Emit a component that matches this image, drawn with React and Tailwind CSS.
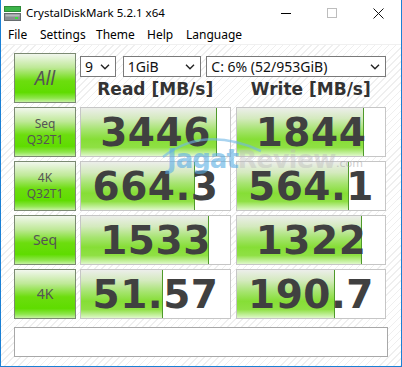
import React from "react";

const rows = [
  { label: ["Seq", "Q32T1"], read: "3446", readBar: 136, write: "1844", writeBar: 127 },
  { label: ["4K", "Q32T1"], read: "664.3", readBar: 114, write: "564.1", writeBar: 112 },
  { label: ["Seq"], read: "1533", readBar: 128, write: "1322", writeBar: 125, big: true },
  { label: ["4K"], read: "51.57", readBar: 82, write: "190.7", writeBar: 98, big: true },
];

const Chevron = () => (
  <svg width="10" height="6" viewBox="0 0 10 6" className="shrink-0">
    <path d="M1 0.8 L5 4.8 L9 0.8" fill="none" stroke="#222" strokeWidth="1.4" />
  </svg>
);

const Select = ({ value, className }) => (
  <div
    className={`h-[21px] flex items-center justify-between pl-[4px] pr-[5px] bg-white border border-[#7a7a7a] text-[14px] text-[#111] ${className}`}
  >
    <span className="leading-none">{value}</span>
    <Chevron />
  </div>
);

const LabelButton = ({ children, className = "" }) => (
  <div
    className={`h-[50px] flex flex-col items-center justify-center border border-[#7b8a72] bg-[linear-gradient(to_bottom,#f2f7ee_0%,#bfe998_28%,#6cdd0e_56%,#5fdc00_80%,#8ee64c_92%,#c6f2a2_100%)] text-[#555] ${className}`}
  >
    {children}
  </div>
);

const ValueCell = ({ value, bar }) => (
  <div className="relative h-[50px] bg-white border border-[#c6c6c6] overflow-hidden">
    <div
      className="absolute left-0 top-0 bottom-0 border-r border-[#4f9a2a] bg-[linear-gradient(to_bottom,#eceeea_0%,#d4eabe_22%,#a6e470_45%,#86de36_65%,#8fe044_82%,#c4f09e_94%,#e0f8cc_100%)]"
      style={{ width: bar }}
    />
    <div className="relative h-full flex items-center justify-center font-['DejaVu_Sans',sans-serif] font-bold text-[39px] text-[#404040] leading-none tracking-[0.5px]">
      {value}
    </div>
  </div>
);

const Watermark = () => (
  <div className="absolute left-[158px] top-[86px] w-[200px] h-[50px] pointer-events-none">
    <svg width="110" height="30" viewBox="0 0 110 30" className="absolute left-0 top-0">
      <path d="M4 26 Q45 -6 102 20" fill="none" stroke="#6fb8e6" strokeOpacity="0.6" strokeWidth="2.5" />
    </svg>
    <div className="absolute left-[8px] top-[15px] flex items-end font-['DejaVu_Sans',sans-serif] font-bold leading-none">
      <span className="text-[26px] text-[#5aaee4] opacity-60 tracking-[-1px]">Jagat</span>
      <span className="text-[25px] text-[#b8b8b8] opacity-40 tracking-[-0.5px]">Review</span>
      <span className="text-[11px] text-[#a0a0a0] opacity-50 mb-[3px] font-normal">.com</span>
    </div>
  </div>
);

const App = () => {
  return (
    <div className="w-[402px] h-[367px] flex flex-col bg-white border border-t-0 border-[#1b80d5] font-['Noto_Sans',sans-serif] overflow-hidden">
      {/* title bar */}
      <div className="h-[26px] flex items-center shrink-0">
        <svg width="17" height="15" viewBox="0 0 17 15" className="ml-[3px] mr-[5px]">
          <rect x="0.5" y="0.5" width="16" height="5" fill="#3cb44a" stroke="#2d8a38" />
          <rect x="0.5" y="7.5" width="16" height="7" fill="#8a8f92" stroke="#666b6e" />
          <rect x="1.5" y="8.5" width="14" height="2" fill="#b7bbbd" />
          <rect x="11" y="11" width="3" height="2" fill="#3fdc3f" />
        </svg>
        <span className="text-[11.5px] text-[#000] leading-none">CrystalDiskMark 5.2.1 x64</span>
        <div className="ml-auto flex items-center h-full">
          <div className="w-[46px] h-full flex items-center justify-center">
            <div className="w-[10px] h-px bg-[#000]" />
          </div>
          <div className="w-[46px] h-full flex items-center justify-center">
            <div className="w-[10px] h-[10px] border border-[#bdbdbd]" />
          </div>
          <div className="w-[46px] h-full flex items-center justify-center">
            <svg width="11" height="11" viewBox="0 0 11 11">
              <path d="M0.5 0.5 L10.5 10.5 M10.5 0.5 L0.5 10.5" stroke="#111" strokeWidth="1" />
            </svg>
          </div>
        </div>
      </div>

      {/* menu */}
      <div className="h-[19px] flex items-center shrink-0 text-[12px] text-[#000] border-b border-[#f0f0f0] pl-[7px]">
        <span className="w-[32px]">File</span>
        <span className="w-[56px]">Settings</span>
        <span className="w-[51px]">Theme</span>
        <span className="w-[39px]">Help</span>
        <span>Language</span>
      </div>

      {/* body */}
      <div className="relative flex-1 bg-[image:repeating-linear-gradient(135deg,#ffffff_0px,#ffffff_4px,#efefef_4px,#efefef_5px)] pt-[8px] pl-[13px] pr-[13px]">
        <div className="grid grid-cols-[62px_151px_151px] gap-x-[4px] gap-y-[4px]">
          <LabelButton>
            <span className="text-[19px] italic leading-none">All</span>
          </LabelButton>
          <div className="col-span-2 flex flex-col h-[50px]">
            <div className="flex mt-[3px]">
              <Select value="9" className="w-[36px]" />
              <Select value="1GiB" className="w-[79px] ml-[7px]" />
              <Select value="C: 6% (52/953GiB)" className="w-[181px] ml-[5px]" />
            </div>
            <div className="flex mt-[4px] font-['DejaVu_Sans',sans-serif] font-bold text-[17px] text-[#333] leading-none">
              <div className="w-[151px] text-center">Read [MB/s]</div>
              <div className="w-[151px] ml-[5px] text-center">Write [MB/s]</div>
            </div>
          </div>

          {rows.map((r) => (
            <React.Fragment key={r.read}>
              <LabelButton>
                {r.label.map((l) => (
                  <span
                    key={l}
                    className={r.big ? "text-[14px] leading-[16px]" : "text-[12px] leading-[16px]"}
                  >
                    {l}
                  </span>
                ))}
              </LabelButton>
              <ValueCell value={r.read} bar={r.readBar} />
              <div className="ml-[1px]">
                <ValueCell value={r.write} bar={r.writeBar} />
              </div>
            </React.Fragment>
          ))}
        </div>

        <div className="mt-[8px] w-[374px] h-[30px] bg-white border border-[#a8a8a8]" />

        <Watermark />
      </div>
    </div>
  );
};

export default App;
